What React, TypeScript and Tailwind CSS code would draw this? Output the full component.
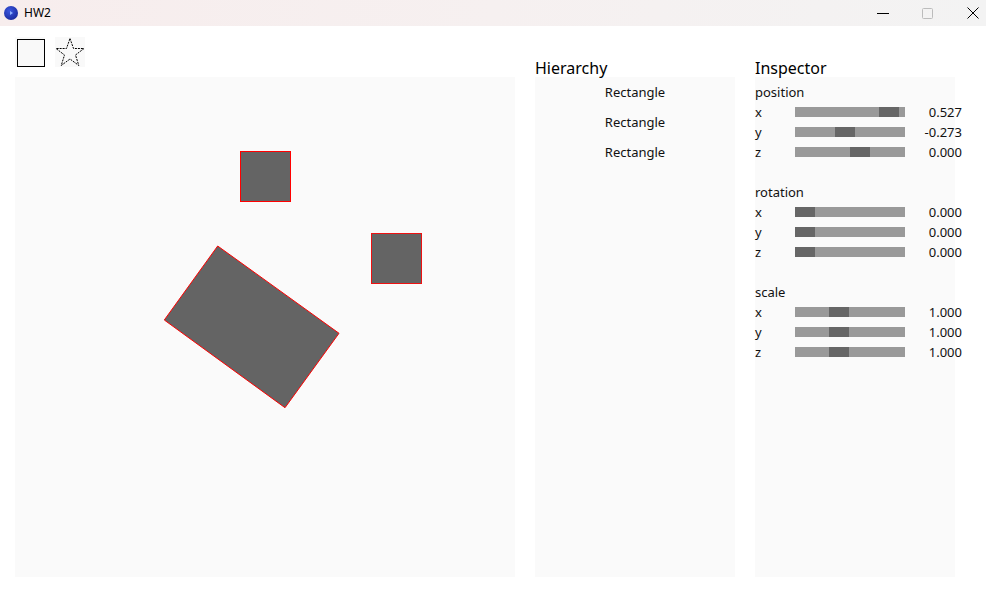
import React from "react";

const font = { fontFamily: '"Noto Sans", "Open Sans", sans-serif' };

type Row = { axis: string; pos: number; value: string };
type Section = { title: string; rows: Row[] };

const sections: Section[] = [
  {
    title: "position",
    rows: [
      { axis: "x", pos: 84, value: "0.527" },
      { axis: "y", pos: 40, value: "-0.273" },
      { axis: "z", pos: 55, value: "0.000" },
    ],
  },
  {
    title: "rotation",
    rows: [
      { axis: "x", pos: 0, value: "0.000" },
      { axis: "y", pos: 0, value: "0.000" },
      { axis: "z", pos: 0, value: "0.000" },
    ],
  },
  {
    title: "scale",
    rows: [
      { axis: "x", pos: 34, value: "1.000" },
      { axis: "y", pos: 34, value: "1.000" },
      { axis: "z", pos: 34, value: "1.000" },
    ],
  },
];

function AppIcon() {
  return (
    <svg width="14" height="14" viewBox="0 0 14 14">
      <defs>
        <radialGradient id="g" cx="40%" cy="35%" r="70%">
          <stop offset="0%" stopColor="#3b57e0" />
          <stop offset="100%" stopColor="#1a2a9c" />
        </radialGradient>
      </defs>
      <circle cx="7" cy="7" r="7" fill="url(#g)" />
      <polygon points="6,5 9,7 6,9" fill="#8fb0ff" />
    </svg>
  );
}

export default function App() {
  return (
    <div className="w-[986px] h-[604px] bg-white flex flex-col overflow-hidden" style={font}>
      {/* Title bar */}
      <div className="h-[26px] flex items-center bg-gradient-to-r from-[#f7eded] via-[#f6f0f0] to-[#f3f3f3] shrink-0 overflow-hidden">
        <div className="pl-[4px] flex items-center">
          <AppIcon />
        </div>
        <span className="ml-[6px] text-[12px] text-black">HW2</span>
        <div className="ml-auto mr-[-9px] flex items-center h-full">
          <div className="w-[45px] h-full flex items-center justify-center">
            <svg width="12" height="12" viewBox="0 0 12 12">
              <line x1="0" y1="6.5" x2="12" y2="6.5" stroke="#000" strokeWidth="1" />
            </svg>
          </div>
          <div className="w-[45px] h-full flex items-center justify-center">
            <svg width="11" height="11" viewBox="0 0 11 11">
              <rect x="0.5" y="0.5" width="10" height="10" rx="1" fill="none" stroke="#bcbcbc" strokeWidth="1" />
            </svg>
          </div>
          <div className="w-[45px] h-full flex items-center justify-center">
            <svg width="12" height="12" viewBox="0 0 12 12">
              <line x1="0.5" y1="0.5" x2="11.5" y2="11.5" stroke="#000" strokeWidth="1" />
              <line x1="11.5" y1="0.5" x2="0.5" y2="11.5" stroke="#000" strokeWidth="1" />
            </svg>
          </div>
        </div>
      </div>

      {/* Toolbar */}
      <div className="flex gap-[10px] pl-[15px] pt-[11px] h-[51px] shrink-0">
        <div className="w-[30px] h-[30px] bg-[#f9f9f9] flex items-center justify-center">
          <div className="w-[28px] h-[28px] border border-black bg-[#f9f9f9] ml-[1px] mt-[1px]" />
        </div>
        <div className="w-[30px] h-[30px] bg-[#f9f9f9] flex items-center justify-center">
          <svg width="30" height="30" viewBox="0 0 30 30">
            <polygon
              points="15,1.5 18.5,11.5 29,11.5 20.5,18 23.8,28.5 15,22 6.2,28.5 9.5,18 1,11.5 11.5,11.5"
              fill="none"
              stroke="#000"
              strokeWidth="1"
              strokeDasharray="2 1"
            />
          </svg>
        </div>
      </div>

      {/* Main area */}
      <div className="flex pl-[15px] gap-[20px]">
        {/* Canvas */}
        <div className="w-[500px] h-[500px] bg-[#fafafa] relative shrink-0">
          <svg className="absolute inset-0" width="500" height="500" viewBox="0 0 500 500">
            <rect x="225.5" y="74.5" width="50" height="50" fill="#646464" stroke="#ff0000" strokeWidth="1" />
            <rect x="356.5" y="156.5" width="50" height="50" fill="#646464" stroke="#ee1111" strokeWidth="1" />
            <polygon
              points="202.7,169 324,256.3 270,330.7 149.3,243"
              fill="#646464"
              stroke="#ff0000"
              strokeWidth="1"
            />
          </svg>
        </div>

        {/* Hierarchy */}
        <div className="w-[200px] relative shrink-0">
          <div className="absolute -top-[19px] left-0 text-[16px] leading-[20px] text-black">Hierarchy</div>
          <div className="w-[200px] h-[500px] bg-[#fafafa] flex flex-col">
            {["Rectangle", "Rectangle", "Rectangle"].map((t, i) => (
              <div key={i} className="h-[30px] pt-[2px] flex items-center justify-center text-[13px] text-[#111]">
                {t}
              </div>
            ))}
          </div>
        </div>

        {/* Inspector */}
        <div className="w-[200px] relative shrink-0">
          <div className="absolute -top-[19px] left-0 text-[16px] leading-[20px] text-black">Inspector</div>
          <div className="w-[200px] h-[500px] bg-[#fafafa] flex flex-col pt-[5px]">
            {sections.map((s) => (
              <div key={s.title} className="flex flex-col h-[100px]">
                <div className="h-[20px] pt-[2px] flex items-center text-[13px] text-[#111]">{s.title}</div>
                {s.rows.map((r) => (
                  <div key={r.axis} className="h-[20px] flex items-center text-[13px] text-[#111]">
                    <span className="w-[40px] shrink-0 pt-[2px]">{r.axis}</span>
                    <div className="w-[110px] h-[10px] bg-[#999999] relative shrink-0">
                      <div className="absolute top-0 h-[10px] w-[20px] bg-[#666666]" style={{ left: r.pos }} />
                    </div>
                    <span className="w-[57px] shrink-0 pt-[2px] text-right whitespace-nowrap">{r.value}</span>
                  </div>
                ))}
              </div>
            ))}
          </div>
        </div>
      </div>
    </div>
  );
}
